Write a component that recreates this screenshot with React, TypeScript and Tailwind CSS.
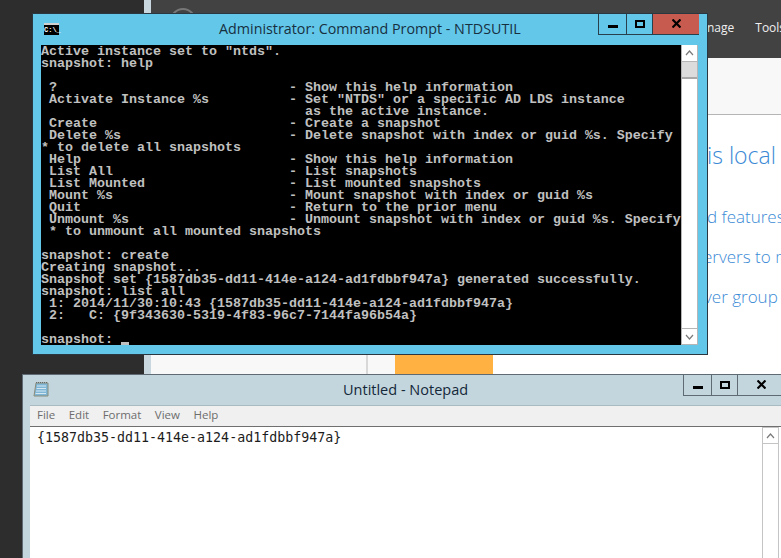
const consoleLines = [
  'Active instance set to "ntds".',
  "snapshot: help",
  "",
  " ?                             - Show this help information",
  ' Activate Instance %s          - Set "NTDS" or a specific AD LDS instance',
  "                                 as the active instance.",
  " Create                        - Create a snapshot",
  " Delete %s                     - Delete snapshot with index or guid %s. Specify",
  "* to delete all snapshots",
  " Help                          - Show this help information",
  " List All                      - List snapshots",
  " List Mounted                  - List mounted snapshots",
  " Mount %s                      - Mount snapshot with index or guid %s",
  " Quit                          - Return to the prior menu",
  " Unmount %s                    - Unmount snapshot with index or guid %s. Specify",
  " * to unmount all mounted snapshots",
  "",
  "snapshot: create",
  "Creating snapshot...",
  "Snapshot set {1587db35-dd11-414e-a124-ad1fdbbf947a} generated successfully.",
  "snapshot: list all",
  " 1: 2014/11/30:10:43 {1587db35-dd11-414e-a124-ad1fdbbf947a}",
  " 2:   C: {9f343630-5319-4f83-96c7-7144fa96b54a}",
  "",
];

function Chevron({ up }: { up?: boolean }) {
  return (
    <svg width="9" height="6" viewBox="0 0 9 6" fill="none" stroke="#7a7a7a" strokeWidth="1.2">
      <path d={up ? "M1 5 L4.5 1 L8 5" : "M1 1 L4.5 5 L8 1"} />
    </svg>
  );
}

function CaptionButtons({ closeBg, border }: { closeBg: string; border: string }) {
  return (
    <div className={`flex h-[21px] shrink-0 border-b border-l ${border}`}>
      <div className={`flex w-[28px] justify-center border-r ${border}`}>
        <div className="mt-[11px] h-[3px] w-[10px] bg-black" />
      </div>
      <div className={`flex w-[26px] justify-center border-r ${border}`}>
        <div className="mt-[6px] h-[8px] w-[10px] border-2 border-black" />
      </div>
      <div className={`flex w-[46px] justify-center pt-[5px] ${closeBg}`}>
        <svg width="9" height="9" viewBox="0 0 9 9" stroke="#000" strokeWidth="2.2">
          <path d="M0.5 0.5 L8.5 8.5 M8.5 0.5 L0.5 8.5" />
        </svg>
      </div>
    </div>
  );
}

function NotepadIcon() {
  return (
    <svg width="16" height="16" viewBox="0 0 16 16">
      <path d="M3 2 H15 V15 H1 Z" fill="#7fb6d6" stroke="#8c8c7a" strokeWidth="1" />
      <path d="M4 5 H13 M3.6 7.5 H13 M3 10 H13 M2.5 12.5 H13" stroke="#d5e8f2" strokeWidth="1" />
      <path d="M3 1.5 H15" stroke="#666" strokeWidth="1" strokeDasharray="1 1" />
    </svg>
  );
}

export default function App() {
  return (
    <div className="relative flex h-[558px] w-[781px] overflow-hidden bg-white font-['Open_Sans',sans-serif]">
      {/* desktop behind the windows */}
      <div className="h-full w-[144px] shrink-0 bg-[#2d2d2d]" />
      <div className="h-full w-[7px] shrink-0 bg-[#c9d8de]" />
      <div className="flex h-full w-[630px] shrink-0 flex-col">
        <div className="flex h-[58px] shrink-0 bg-[#424242] text-[12px] text-[#f0f0f0]">
          <div className="ml-[19px] mt-[8px] h-[26px] w-[26px] shrink-0 rounded-full border-2 border-[#777777]" />
          <span className="ml-[511px] mt-[19px]">nage</span>
          <span className="ml-[21px] mt-[19px]">Tools</span>
        </div>
        <div className="h-[57px] shrink-0 border-b border-[#b5b5b5] bg-[#f8f8f8]" />
        <div className="flex flex-1">
          <div className="w-[217px] shrink-0 border-r-2 border-[#d8d8d8] bg-[#f8f8f8]" />
          <div className="w-[27px] shrink-0 bg-[#f8f8f8]" />
          <div className="h-full w-[98px] shrink-0 bg-[#ffb142]" />
          <div className="min-w-0 flex-1 overflow-hidden pl-[214px] pt-[23px] font-light text-[#3b8ad6]">
            <div className="whitespace-nowrap text-[23px] leading-[34px]">is local s</div>
            <div className="mt-[31px] whitespace-nowrap text-[17px] leading-[28px]">d features</div>
            <div className="-ml-[4px] mt-[12px] whitespace-nowrap text-[17px] leading-[28px]">ervers to m</div>
            <div className="-ml-[3px] mt-[12px] whitespace-nowrap text-[17px] leading-[28px]">ver group</div>
          </div>
        </div>
      </div>

      {/* command prompt window */}
      <div className="absolute left-[32px] top-[13px] flex h-[342px] w-[676px] flex-col border border-[#2a3640] bg-[#63c7ea]">
        <div className="relative flex h-[31px] items-start">
          <div className="ml-[11px] mt-[9px] flex h-[12px] w-[15px] items-end border-t-2 border-[#d0d0d0] bg-black font-['Liberation_Mono',monospace] text-[7px] font-bold leading-[9px] text-white">
            C:\_
          </div>
          <div className="flex-1 pl-[160px] pt-[4px] text-[14.3px] leading-[22px] whitespace-nowrap text-[#17303f]">
            Administrator: Command Prompt - NTDSUTIL
          </div>
          <div className="mr-[8px]">
            <CaptionButtons closeBg="bg-[#c75b50]" border="border-[#2a3f4c]" />
          </div>
        </div>
        <div className="ml-[8px] flex h-[300px] w-[657px]">
          <div className="w-[640px] overflow-hidden bg-black pt-[1px] font-['Liberation_Mono',monospace] text-[13.33px] font-bold leading-[12px] text-[#c0c0c0]">
            {consoleLines.map((line, i) => (
              <div key={i} className="h-[12px] whitespace-pre">
                {line}
              </div>
            ))}
            <div className="flex h-[11px] whitespace-pre">
              snapshot:{" "}
              <span className="mt-[8px] h-[3px] w-[8px] bg-[#c0c0c0]" />
            </div>
          </div>
          <div className="flex w-[17px] flex-col border-x border-[#b5b5b5] bg-white">
            <div className="flex h-[17px] items-center justify-center border-b border-[#b5b5b5]">
              <Chevron up />
            </div>
            <div className="h-[17px] border-b-2 border-[#a8a8a8] bg-[#dcdcdc]" />
            <div className="flex-1" />
            <div className="flex h-[17px] items-center justify-center border-y border-[#b5b5b5]">
              <Chevron />
            </div>
          </div>
        </div>
      </div>

      {/* notepad window */}
      <div className="absolute left-[22px] top-[374px] flex h-[190px] w-[770px] flex-col border border-[#5f6b72] bg-[#c3d6dd]">
        <div className="flex h-[30px] shrink-0 items-start">
          <div className="ml-[10px] mt-[6px]">
            <NotepadIcon />
          </div>
          <div className="flex-1 pl-[294px] pt-[4px] text-[14.5px] leading-[21px] whitespace-nowrap text-[#14283a]">
            Untitled - Notepad
          </div>
          <div className="mr-[7px]">
            <CaptionButtons closeBg="" border="border-[#5f6b72]" />
          </div>
        </div>
        <div className="ml-[7px] flex-1 border-t border-[#a9bac2] bg-[#f0f0f0]">
          <div className="flex h-[20px] items-center gap-[13.5px] pb-[2px] pl-[7px] text-[11.5px] text-[#6d6d6d]">
            <span>File</span>
            <span>Edit</span>
            <span>Format</span>
            <span>View</span>
            <span>Help</span>
          </div>
          <div className="flex h-full border-t border-[#6f6f6f] bg-white">
            <div className="flex-1 pl-[7px] pt-[3px] font-['DejaVu_Sans_Mono',monospace] text-[13.3px] leading-[16px] text-[#1c1c1c]">
              {"{1587db35-dd11-414e-a124-ad1fdbbf947a}"}
            </div>
            <div className="mr-[12px] flex w-[17px] flex-col border-x border-[#c4c4c4]">
              <div className="flex h-[17px] items-center justify-center border-y border-[#c4c4c4]">
                <Chevron up />
              </div>
            </div>
          </div>
        </div>
      </div>
    </div>
  );
}
